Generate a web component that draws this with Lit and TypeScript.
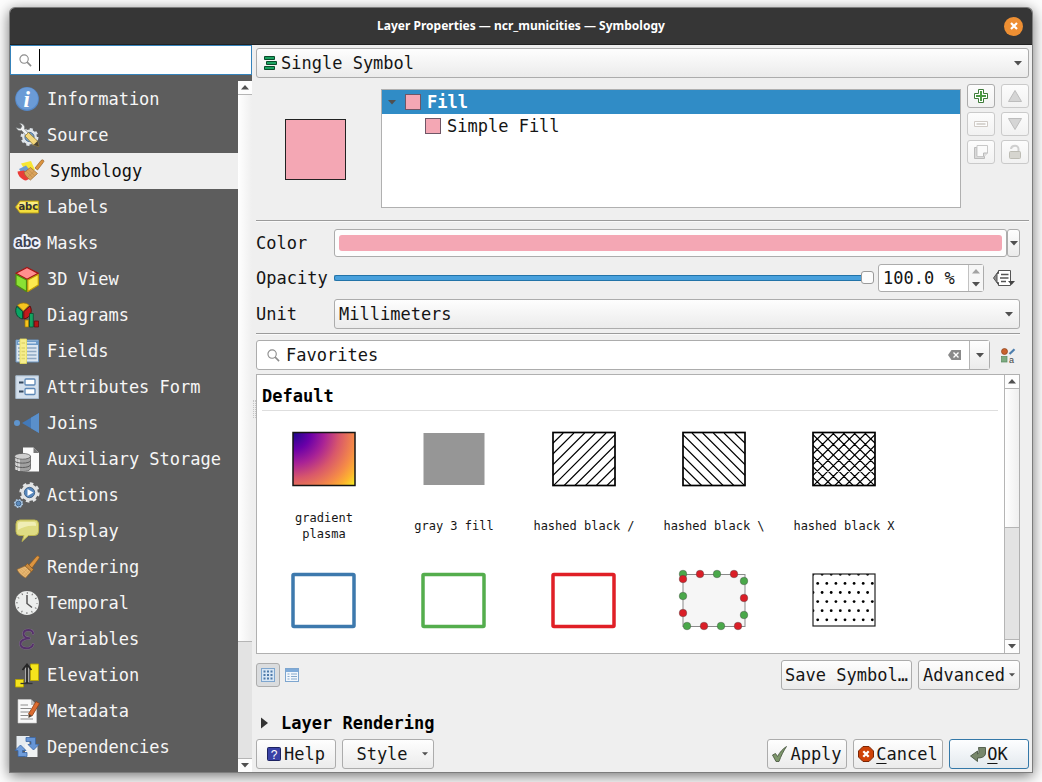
import { LitElement, html, svg, css } from "lit";
import { customElement, property, state } from "lit/decorators.js";
import { classMap } from "lit/directives/class-map.js";

const brush = svg`
  <path d="M13 11 21.5 1.5Q23 .2 24 1.500T23.500 4L17 13z" fill="#dc9440" stroke="#8a5314" stroke-width=".6"/>
  <path d="M12.500 8.500 18.500 14.500 16.500 16.800 10 11z" fill="#c98a3e" stroke="#80501a" stroke-width=".6"/>
  <path d="M10 11 16 16.800 10.500 23C7 21 3.500 18 2 14.500z" fill="#e8b873" stroke="#99682c" stroke-width=".7"/>
  <path d="M8 12.500 14 18.500M5.800 13.500 12.300 20M4 14.500 11 21.500M12.500 13.500 6.500 19.500M14.500 15.500 9 21.500" stroke="#cf9850" stroke-width=".5"/>`;

const gear = (x: number, y: number, r: number, body: string, core: string) => svg`
  <circle cx=${x} cy=${y} r=${r} fill=${body}/>
  <circle cx=${x} cy=${y} r=${r} fill="none" stroke=${body} stroke-width=${r * 0.42}
    stroke-dasharray="${(r * Math.PI) / 8} ${(r * Math.PI) / 8}"/>
  <circle cx=${x} cy=${y} r=${r * 0.62} fill=${core} stroke="#36577a" stroke-width=".8"/>`;

const icons: Record<string, unknown> = {
  Information: svg`
    <circle cx="12" cy="12" r="11.900" fill="#5587c6"/>
    <circle cx="12" cy="11.500" r="11" fill="#6b9bd6"/>
    <text x="11.600" y="20" text-anchor="middle" class="i">i</text>`,
  Source: svg`
    ${gear(14.5, 14, 7.4, "#dfe5ea", "#7ea3c8")}
    <path d="M1 4.500C2 7 4.500 8.500 6.500 7.500L15.500 17.500 18.500 15.500 9.500 6C10.500 3 8 .3 4.500 .3L7 3 5.500 5.500 2.500 5z" fill="#eef0f1" stroke="#6d7173" stroke-width=".7"/>
    <path d="M10 13 13.500 9.500 22.500 18 24 23.500 18.500 22z" fill="#f3d77c" stroke="#8f7a35" stroke-width=".8"/>
    <path d="M22.500 18 24 23.500 18.500 22z" fill="#4a4334"/>`,
  Symbology: svg`
    <path d="M3 4.500 13 2 17 11 8 13z" fill="#f8e632"/>
    <path d="M1 10 8 6.500 14 14 5 16z" fill="#6d9bd0"/>
    <path d="M-.5 12.500 6 11.500 14 18.500 8 21.500C4 21 0 17 -.5 12.500z" fill="#ea3c37"/>
    <g transform="translate(4 0)"><path d="M13 9 19 1.500Q20.500 .2 21.500 1.300T21 3.800L15.500 11z" fill="#dc9440" stroke="#8a5314" stroke-width=".6"/>
    <path d="M8.500 8.500 15.500 14.500 8.500 21C5.500 19 3 16.500 2 13.500z" fill="#d9a35c" stroke="#99682c" stroke-width=".7"/>
    <path d="M6 10.500 12.500 16.500M4 12 10.500 18.500M12 12.500 6 18" stroke="#b98540" stroke-width=".5"/></g>`,
  Labels: svg`
    <path d="M.5 12 5 6H23.500V18H5z" fill="#f3de3d" stroke="#b59a16" stroke-width=".9"/>
    <path d="M5.500 7H22.500V11H2.500z" fill="#faee83"/>
    <text x="13.300" y="15.300" text-anchor="middle" class="tag">abc</text>`,
  Masks: svg`
    <text x="12" y="16" text-anchor="middle" class="mask">abc</text>`,
  "3D View": svg`
    <path d="M12 .5 23.300 6.300 12 12.300 1 6.300z" fill="#ff8f8f" stroke="#a61313" stroke-width="1.300" stroke-linejoin="round"/>
    <path d="M1 7.500 11.500 13V24.500L1 18z" fill="#8ae234" stroke="#4f8b10" stroke-width="1.200" stroke-linejoin="round"/>
    <path d="M23.300 7.500 12.800 13V24.500L23.300 18z" fill="#fce94f" stroke="#c4a000" stroke-width="1.200" stroke-linejoin="round"/>`,
  Diagrams: svg`
    <path d="M8.500 8 2.500 2.300C6 -.8 11 -.8 14.200 2.300z" fill="#f7c51e" stroke="#9f7800" stroke-width=".7"/>
    <path d="M7.500 8.500V16C2 15 -1 9 1.800 3.300z" fill="#0aa564" stroke="#06452a" stroke-width=".9"/>
    <path d="M8.800 8.500 15 3C18 8 15.500 15 8.800 16z" fill="#c11b1b" stroke="#5a0808" stroke-width=".9"/>
    <path d="M10 17H13.500V24H10z" fill="#f7c51e" stroke="#9f7800" stroke-width=".7"/>
    <path d="M14.500 10.500H18.300V24H14.500z" fill="#13a560" stroke="#06452a" stroke-width=".7"/>
    <path d="M19.300 18H23.500V24H19.300z" fill="#b31515" stroke="#5a0808" stroke-width=".7"/>`,
  Fields: svg`
    <path d="M1 1H23.500V23H1z" fill="#dbe6f1" stroke="#6a93bd" stroke-width="1"/>
    <path d="M1.500 1.500H23V6H1.500z" fill="#6e9cca"/>
    <path d="M3 3.700H6M12 3.700H21" stroke="#cfe0f2" stroke-width="1.500"/>
    <path d="M3 9H5M12 9H21.500M3 12.500H5M12 12.500H21.500M3 16H5M12 16H21.500M3 19.500H5M12 19.500H21.500" stroke="#8fa9c4" stroke-width="1.500"/>
    <path d="M5 0H11.500V24.500H5z" fill="#f6ee8c" stroke="#e8dd5a" stroke-width=".8"/>
    <path d="M6.500 4H10M6.500 9H10M6.500 12.500H10M6.500 16H10M6.500 19.500H10" stroke="#ded56c" stroke-width="1.300"/>`,
  "Attributes Form": svg`
    <path d="M.8 .8H23.500V23.500H.8z" fill="#d3dfec" stroke="#a9bccf"/>
    <path d="M4 7.500H8.500M4 16.500H8.500" stroke="#33475c" stroke-width="1.800"/>
    <rect x="10" y="4" width="10" height="6" rx="1" fill="#fff" stroke="#5d88b6" stroke-width="1.300"/>
    <rect x="10" y="13.500" width="10" height="6" rx="1" fill="#fff" stroke="#5d88b6" stroke-width="1.300"/>`,
  Joins: svg`
    <circle cx="2" cy="12" r="3" fill="#5f95ce"/>
    <path d="M7 12 24 2V22z" fill="#4379b8"/><path d="M16 6.700 24 2V22L16 17.300z" fill="#5a8fca"/>`,
  "Auxiliary Storage": svg`
    <path d="M8 .5H18.500L24 6V24.500H8z" fill="#fbfbfb"/><path d="M18.500 .5V6H24z" fill="#777"/>
    <path d="M-.5 9V21.500C-.5 25.500 15.500 25.500 15.500 21.500V9z" fill="#a0a0a0" stroke="#555" stroke-width=".7"/>
    <path d="M1.500 11V23M4 11V24" stroke="#d8d8d8" stroke-width="2"/>
    <ellipse cx="7.500" cy="9.300" rx="8" ry="2.900" fill="#cfcfcf" stroke="#555" stroke-width=".7"/>
    <path d="M-.5 13.500C-.5 17 15.500 17 15.500 13.500M-.5 17.500C-.5 21.500 15.500 21.500 15.500 17.500" fill="none" stroke="#5d5d5d" stroke-width="1"/>`,
  Actions: svg`
    ${gear(14.5, 9.5, 8.4, "#e2e4e5", "#5687bd")}
    <path d="M12.500 6V13L18.300 9.500z" fill="#fff"/>
    ${gear(3.5, 20.5, 3.8, "#a8c4e0", "#5c8bbd")}`,
  Display: svg`
    <path d="M5 1H19.500Q23.500 1 23.500 5V12.500Q23.500 16.500 19.500 16.500H13.500L7 22.500 9 16.500H5Q1 16.500 1 12.500V5Q1 1 5 1z" fill="#dfdc83" stroke="#bdb64f"/>
    <path d="M5 3H19Q21 3 21 5V7C14 6 8 8 3 11V5Q3 3 5 3z" fill="#f0eeb5"/>`,
  Rendering: brush,
  Temporal: svg`
    <circle cx="12" cy="12" r="11.900" fill="#eceeed"/>
    <circle cx="12" cy="12" r="10" fill="none" stroke="#777" stroke-width="1.800" stroke-dasharray="1 4.236" stroke-dashoffset=".5"/>
    <path d="M12 4V12.500L17 16.500" fill="none" stroke="#555" stroke-width="1.500"/>`,
  Variables: svg`
    <path d="M18 6.500C18.500 2 9 1.500 8.500 6.500C8.500 9.500 11 11 14.500 11.200C8.500 11.500 5 14 5.500 17.500C6.500 22.500 16.500 22.500 18 17.500" fill="none" stroke="#8d7898" stroke-width="2.600" stroke-linecap="round" stroke-linejoin="round"/>
    <path d="M18 6.500C18.500 2 9 1.500 8.500 6.500C8.500 9.500 11 11 14.500 11.200C8.500 11.500 5 14 5.500 17.500C6.500 22.500 16.500 22.500 18 17.500" fill="none" stroke="#55316a" stroke-width="1.900" stroke-linecap="round" stroke-linejoin="round"/>`,
  Elevation: svg`
    <path d="M15.500 1H23.500V17.500H15.500z" fill="#f5e41d" stroke="#b7a400" stroke-width=".9"/>
    <path d="M.5 16.500H8.500V24H.5z" fill="#f5e41d" stroke="#b7a400" stroke-width=".9"/>
    <path d="M12 19V3" stroke="#bdbdbd" stroke-width="3.600"/>
    <path d="M5.500 20.500H17.500" stroke="#333" stroke-width="1.300"/>
    <path d="M12 20V3M7.500 7 12 1.500 16.500 7" fill="none" stroke="#252525" stroke-width="1.800"/>`,
  Metadata: svg`
    <path d="M3 .5H16L21.500 6V24H3z" fill="#f8f8f8" stroke="#c9c9c9" stroke-width=".6"/>
    <path d="M16 .5V6H21.500z" fill="#bbb"/>
    <path d="M5.500 6H13M5.500 9.500H16M5.500 13H15M5.500 16.500H13M5.500 20H18" stroke="#8b8b8b" stroke-width="1.100"/>
    <path d="M21 2.500 24.500 4.500 17 17 13.500 15z" fill="#dd6c30" stroke="#8e3d12" stroke-width=".8"/>
    <path d="M13.500 15 17 17 13.500 19z" fill="#4b3a2c"/>`,
  Dependencies: svg`
    <path d="M1.500 1H14.500V14H1.500z" fill="#e5ebf0"/><path d="M10 9H22.500V22H10z" fill="#f1f3f4"/>
    <path d="M11 2.500H20.500V9.500H24L18.500 15 13 9.500H16V6.500H11z" fill="#6695d6" stroke="#3a66a5" stroke-width=".8"/>
    <path d="M12 21.500H3V15.500H0L5.500 10 11 15.500H7.500V17.500H12z" fill="#6f9ddb" stroke="#3a66a5" stroke-width=".8"/>`,
};

const arrow = html`<svg class="arrow" width="8" height="5" viewBox="0 0 8 5" aria-hidden="true"><path d="M0 0H8L4 4.500z" fill="#505050"/></svg>`;
const arrowUp = html`<svg class="arrow" width="8" height="5" viewBox="0 0 8 5" aria-hidden="true"><path d="M0 4.500H8L4 0z" fill="#505050"/></svg>`;
const lens = html`<svg class="lens" width="13" height="13" viewBox="0 0 14 14" aria-hidden="true"><circle cx="5.500" cy="5.500" r="4.500" fill="none" stroke="#8c8c8c" stroke-width="1.200"/><path d="M8.800 8.800 13 13" stroke="#8c8c8c" stroke-width="1.700"/></svg>`;

const control = css`
  * { box-sizing: border-box; }
  button, input, select { font: inherit; color: inherit; margin: 0; }
  svg { display: block; flex: none; overflow: visible; }
`;

@customElement("scroll-rail")
export class ScrollRail extends LitElement {
  @property() label = "";
  static styles = [control, css`
    :host { display: flex; flex-direction: column; background: #e3e3e3; }
    button { display: grid; place-items: center; height: 14px; padding: 0; border: 0; background: #fdfdfd; flex: none; }
    .up { border-bottom: 1px solid #b5b5b5; }
    .down { border-top: 1px solid #b5b5b5; }
    .track { flex: 1; display: flex; flex-direction: column; }
    .thumb { flex: var(--thumb); background: linear-gradient(90deg, #fff, #efefef); border-bottom: 1px solid #b5b5b5; }
    .rest { flex: var(--rest); }
  `];
  render() {
    return html`
      <button class="up" aria-label="Scroll ${this.label} up">${arrowUp}</button>
      <div class="track"><div class="thumb"></div><div class="rest"></div></div>
      <button class="down" aria-label="Scroll ${this.label} down">${arrow}</button>`;
  }
}

const STEP = 10.7;
const slashes = Array.from({ length: 12 }, (_, k) => {
  const c = 53 + STEP * (k - 5);
  return `M${c} 0L${c - 53} 53`;
}).join("");
const backslashes = Array.from({ length: 12 }, (_, k) => {
  const c = 9 + STEP * (k - 6);
  return `M${c} 0L${c + 53} 53`;
}).join("");

const hatch = (d: string) => svg`
  <svg x="-31" y="-26" width="62" height="53" class="clip"><path d=${d} stroke="#000" stroke-width="1.200"/></svg>
  <rect x="-31" y="-26.500" width="62" height="53" fill="none" stroke="#000" stroke-width="1.700"/>`;
const outline = (c: string) => svg`<rect x="-31" y="-25.500" width="61" height="52" rx="1" fill="none" stroke=${c} stroke-width="3.500"/>`;

const RED = "#da1e27";
const GREEN = "#4aa84a";
const markers: [number, number][] = [
  [-31, -26], [-14, -26], [3, -26], [20, -26], [30, -19], [30, -2], [30, 15],
  [24, 26], [7, 26], [-10, 26], [-27, 26], [-31, 13], [-31, -4], [-31, -21],
];
const dots: unknown[] = [];
for (let r = 0; r < 6; r++) {
  for (let k = 0; k < 8; k++) {
    dots.push(svg`<circle cx=${(r % 2 ? 4.7 : 0) + k * 9.1} cy=${0.3 + r * 9.1} r="1.400"/>`);
  }
}

const symbols = [
  { name: "gradient plasma", art: svg`
    <defs><radialGradient id="plasma" gradientUnits="userSpaceOnUse" cx="-31" cy="-27" r="80">
      <stop offset="0" stop-color="#1a078c"/><stop offset=".22" stop-color="#6a00a8"/>
      <stop offset=".4" stop-color="#a82296"/><stop offset=".58" stop-color="#d8576b"/>
      <stop offset=".78" stop-color="#f58b47"/><stop offset=".9" stop-color="#fdb42f"/><stop offset="1" stop-color="#f5e626"/>
    </radialGradient></defs>
    <rect x="-31" y="-26.500" width="62" height="53" fill="url(#plasma)" stroke="#151515" stroke-width="1.500"/>` },
  { name: "gray 3 fill", art: svg`<rect x="-30.500" y="-26" width="61" height="52" fill="#969696"/>` },
  { name: "hashed black /", art: hatch(slashes) },
  { name: "hashed black \\", art: hatch(backslashes) },
  { name: "hashed black X", art: hatch(slashes + backslashes) },
  { name: "", art: outline("#3d79ad") },
  { name: "", art: outline("#54ad4d") },
  { name: "", art: outline("#e01f26") },
  { name: "", art: svg`
    <rect x="-31" y="-25.500" width="62" height="52" fill="#f6f6f6" stroke="#8a8a8a"/>
    ${markers.map(([x, y], i) => svg`<circle cx=${x} cy=${y} r="3.800" fill=${i % 2 ? RED : GREEN} stroke="#444" stroke-width=".4"/>`)}` },
  { name: "", art: svg`
    <svg x="-31" y="-26" width="62" height="53" class="clip">${dots}</svg>
    <rect x="-31" y="-26" width="62" height="52" fill="none" stroke="#222" stroke-width="1.200"/>` },
];

const toolIcons = [
  { label: "Add symbol layer", on: true, art: svg`<path d="M4.500 .5H9.500V4.500H13.500V9.500H9.500V13.500H4.500V9.500H.5V4.500H4.500z" fill="#fff" stroke="#3f7a3a"/><path d="M7 2V12M2 7H12" stroke="#4a9a42" stroke-width="2"/>` },
  { label: "Move up", art: svg`<path d="M.5 12.500 7 1.500 13.500 12.500z" fill="#d5d5d5" stroke="#bdbdbd"/>` },
  { label: "Remove symbol layer", art: svg`<path d="M.5 4.500H13.500V9.500H.5z" fill="#fdfdfd" stroke="#d0cbc6"/><path d="M2.500 7H11.500" stroke="#cdc8c3" stroke-width="1.500"/>` },
  { label: "Move down", art: svg`<path d="M.5 1.500H13.500L7 12.500z" fill="#d5d5d5" stroke="#bdbdbd"/>` },
  { label: "Duplicate", art: svg`<path d="M.5 2.500V13.500H10.500V11H3V2.500z" fill="#d9d9d9" stroke="#bbb"/><path d="M3 .5H13.500V8L10 11.500H3z" fill="#fafafa" stroke="#c8c8c8"/><path d="M13.500 8H9.500V11.500" fill="#ddd" stroke="#bbb"/>` },
  { label: "Lock colour", art: svg`<path d="M3 4C3.500 0 10.500 -.5 10.500 4V7" fill="none" stroke="#cfcfcf" stroke-width="2"/><rect x="1.500" y="6.500" width="11" height="7" rx="1" fill="#d6d5cf" stroke="#bdbcb4"/>` },
];

@customElement("app-root")
export class AppRoot extends LitElement {
  @state() private page = "Symbology";

  static styles = [control, css`
    :host {
      display: flex; box-sizing: border-box; height: 100vh; padding: 8px 10px 10px;
      background: #fdfdfd; color: #151515; overflow: hidden;
      font: 17px/24px "DejaVu Sans Mono", "Liberation Mono", monospace;
    }
    .window {
      flex: 1; min-width: 0; display: flex; flex-direction: column;
      border-radius: 5px 5px 0 0; background: #efefef;
      box-shadow: 0 0 0 1px #7c7c7c, 0 3px 14px 1px rgba(0, 0, 0, 0.55);
    }
    .title {
      display: grid; grid-template-columns: 1fr auto 1fr; align-items: center; height: 37px; flex: none;
      background: #363636; border-radius: 5px 5px 0 0; border-bottom: 1px solid #222; padding: 0 9px;
    }
    .title h1 { grid-column: 2; margin: 0; color: #fff; font: bold 12px/18px "Noto Sans", "Open Sans", sans-serif; }
    .close { justify-self: end; width: 19px; height: 19px; padding: 0; border: 0; border-radius: 50%; background: #ee8f33; display: grid; place-items: center; }
    .body { flex: 1; min-height: 0; display: grid; grid-template-columns: 242px 4px minmax(0, 1fr); }

    .side { display: flex; flex-direction: column; min-height: 0; background: #5d5d5d; }
    .search { position: relative; display: flex; align-items: center; height: 30px; flex: none; background: #fff; border: 1px solid #3583bb; padding-left: 8px; gap: 6px; }
    .search input { flex: 1; min-width: 0; border: 0; outline: 0; background: none; padding: 0; }
    .caret { position: absolute; left: 28px; top: 3px; width: 1px; height: 22px; background: #000; }
    .pages { flex: 1; min-height: 0; display: flex; padding-top: 6px; }
    .pages ul { flex: 1; min-width: 0; margin: 0; padding: 0; list-style: none; overflow: hidden; }
    .page { display: flex; align-items: center; gap: 8px; width: 100%; height: 36px; padding: 0 0 0 5px; border: 0; background: none; color: #f6f6f6; text-align: left; }
    .page.current { background: #efefef; color: #111; padding-left: 8px; }
    .pages scroll-rail { width: 14px; --thumb: 548; --rest: 116; }
    .i { font: italic bold 23px "Liberation Serif", serif; fill: #fff; }
    .tag { font: bold 10px "DejaVu Sans", sans-serif; fill: #333; }
    .mask { font: bold 14px "Liberation Sans", sans-serif; fill: #3a3f50; stroke: #eef0fa; stroke-width: 4px; stroke-linejoin: round; paint-order: stroke; }

    .split { align-self: center; width: 3px; height: 18px; justify-self: center; border: 1px dotted #c5c5c5; border-width: 0 1px; }
    .main { display: flex; flex-direction: column; min-width: 0; min-height: 0; padding: 3px 3px 3px 0; }
    .inner { padding-right: 9px; }
    .rule { height: 2px; margin: 0; border: 0; border-top: 1px solid #9b9b9b; background: #fafafa; flex: none; }

    .push, .pick select {
      height: 30px; border: 1px solid #acacac; border-radius: 3px;
      background: linear-gradient(#fefefe, #ebebeb);
    }
    .pick { position: relative; flex: 1; min-width: 0; display: flex; }
    .pick select { appearance: none; width: 100%; padding: 0 24px 0 4px; }
    .pick .arrow { position: absolute; right: 7px; top: 13px; pointer-events: none; }
    .pick .mark { position: absolute; left: 8px; top: 8px; pointer-events: none; }
    .renderer { flex: none; }
    .renderer select { padding-left: 24px; }

    .symbol { display: flex; margin: 6px 0 12px; height: 124px; flex: none; }
    .preview { width: 125px; display: grid; place-items: center; padding: 7px 6px 0 0; }
    .preview div { width: 61px; height: 61px; background: #f4a7b4; border: 1px solid #222; }
    .tree { flex: 1; min-width: 0; margin: 5px 6px 0 0; padding: 0; list-style: none; background: #fff; border: 1px solid #b0b0b0; }
    .tree li { display: flex; align-items: center; gap: 6px; height: 24px; padding-left: 43px; }
    .tree .root { background: #308cc6; color: #fff; font-weight: bold; padding-left: 6px; }
    .root .arrow { margin-right: 3px; }
    .chip { width: 16px; height: 16px; background: #f4a7b4; border: 1px solid #6f5666; }
    .tools { display: grid; grid-template-columns: 28px 28px; grid-auto-rows: 24px; gap: 4px 6px; align-content: start; }
    .tool { display: grid; place-items: center; padding: 0; border: 1px solid #cacaca; border-radius: 3px; background: linear-gradient(#fcfcfc, #f1f1f1); }
    .tool.on { border-color: #acacac; }

    .form { display: grid; grid-template-columns: 78px minmax(0, 1fr); row-gap: 7px; align-items: center; padding-top: 7px; padding-bottom: 4px; }
    .form > div { display: flex; align-items: center; min-width: 0; }
    .color { flex: 1; height: 28px; padding: 4px; border: 1px solid #acacac; border-radius: 3px; background: #fdfdfd; }
    .color span { display: block; height: 16px; border-radius: 3px; background: #f4a7b4; }
    .more { width: 13px; height: 28px; padding: 0; display: grid; place-items: center; border: 1px solid #acacac; border-radius: 3px; background: linear-gradient(#fefefe, #ebebeb); }
    .range { flex: 1; min-width: 0; appearance: none; height: 14px; background: none; }
    .range::-webkit-slider-runnable-track { height: 6px; border: 1px solid #2273a8; border-right: 0; border-radius: 2px; background: #48a0dc; }
    .range::-webkit-slider-thumb { appearance: none; width: 13px; height: 13px; margin-top: -5px; border: 1px solid #9a9a9a; border-radius: 3px; background: #fcfcfc; }
    .spin { display: flex; width: 106px; height: 28px; margin-left: 4px; background: #fff; border: 1px solid #acacac; border-radius: 3px; }
    .spin input { flex: 1; min-width: 0; border: 0; padding: 0 0 0 4px; background: none; outline: 0; }
    .spin div { width: 15px; display: grid; border-left: 1px solid #c2c2c2; background: #f6f6f6; }
    .spin button { display: grid; place-items: center; padding: 0; border: 0; background: none; }
    .spin .dim { opacity: 0.5; }
    .plain { display: grid; place-items: center; padding: 0; border: 0; background: none; }
    .override { width: 36px; height: 28px; padding-left: 4px; }

    .filter { display: flex; padding-top: 5px; padding-bottom: 4px; }
    .combo { flex: 1; display: flex; align-items: center; height: 30px; border: 1px solid #acacac; border-radius: 3px; background: #fff; padding-left: 10px; gap: 6px; }
    .combo input { flex: 1; min-width: 0; border: 0; outline: 0; padding: 0; background: none; }
    .combo .drop { width: 20px; height: 28px; margin-left: 2px; padding: 0; display: grid; place-items: center; border: 0; border-left: 1px solid #b5b5b5; background: linear-gradient(#fefefe, #ebebeb); }
    .manage { width: 30px; padding-left: 6px; }

    .library { flex: 1; min-height: 0; display: flex; margin-right: 9px; background: #fff; border: 1px solid #b0b0b0; }
    .gallery { flex: 1; min-width: 0; overflow: hidden; }
    .gallery h2 { margin: 0 6px 0 5px; padding-top: 7px; font: inherit; font-weight: bold; line-height: 28px; color: #000; border-bottom: 1px solid #dedede; }
    .grid { display: grid; grid-template-columns: repeat(auto-fill, 130px); grid-auto-rows: 141px; margin: 0; padding: 0 0 0 2px; list-style: none; }
    .grid li { display: flex; flex-direction: column; align-items: center; gap: 21px; padding-top: 18px; }
    .name { display: flex; align-items: center; height: 32px; max-width: 104px; text-align: center; font-size: 12px; line-height: 16px; }
    .clip { overflow: hidden; }
    .library scroll-rail { width: 15px; border-left: 1px solid #b5b5b5; --thumb: 139; --rest: 111; }

    .actions { display: flex; align-items: center; gap: 6px; padding-top: 6px; flex: none; }
    .view { width: 24px; height: 24px; border: 1px solid transparent; border-radius: 3px; background: none; padding: 0; display: grid; place-items: center; }
    .view.on { background: #dadcde; border-color: #adadad; }
    .actions .view + .view { margin-left: -6px; }
    .grow { flex: 1; }
    .push { display: flex; align-items: center; justify-content: center; padding: 0 4px; white-space: nowrap; }
    .advanced { gap: 4px; width: 102px; }
    .save { width: 131px; }
    .push .arrow { width: 6px; height: 4px; }
    .fold { align-self: flex-start; display: flex; align-items: center; gap: 12px; margin: 21px 0 4px; height: 24px; padding: 0 0 0 4px; border: 0; background: none; font-weight: bold; color: #000; }
    .dialog { display: flex; gap: 6px; flex: none; }
    .help, .apply, .ok { width: 80px; }
    .help, .apply { gap: 3px; }
    .cancel { width: 90px; gap: 2px; }
    .style { width: 92px; gap: 14px; padding-left: 12px; }
    .ok { border-color: #3478a8; background: linear-gradient(#fdfeff, #e3e9ee); gap: 1px; }
    u { text-underline-offset: 3px; }
  `];

  render() {
    return html`
      <div class="window">
        <header class="title">
          <h1>Layer Properties — ncr_municities — Symbology</h1>
          <button class="close" aria-label="Close"><svg width="8" height="8" viewBox="0 0 8 8"><path d="M1 1 7 7M7 1 1 7" stroke="#fff" stroke-width="2.200"/></svg></button>
        </header>
        <div class="body">${this.renderSide()}<div class="split"></div>${this.renderMain()}</div>
      </div>`;
  }

  private renderSide() {
    return html`
      <aside class="side">
        <div class="search">${lens}<input type="text" aria-label="Search pages"><span class="caret"></span></div>
        <nav class="pages">
          <ul>
            ${Object.keys(icons).map((name) => html`<li>
              <button class=${classMap({ page: true, current: name === this.page })} @click=${() => (this.page = name)}>
                <svg width="24" height="24" viewBox="0 0 24 24" aria-hidden="true">${icons[name]}</svg>${name}
              </button></li>`)}
          </ul>
          <scroll-rail label="pages"></scroll-rail>
        </nav>
      </aside>`;
  }

  private renderMain() {
    return html`
      <main class="main">
        <div class="pick renderer">
          <select aria-label="Renderer"><option>Single Symbol</option></select>
          <svg class="mark" width="13" height="14" viewBox="0 0 13 14" aria-hidden="true"><path d="M.5 .5H10.500V3.500H.5zM2.500 5.500H12.500V8.500H2.500zM.5 10.500H10.500V13.500H.5z" fill="#1aa260" stroke="#0a4a2a"/></svg>
          ${arrow}
        </div>
        <section class="symbol">
          <div class="preview"><div></div></div>
          <ul class="tree">
            <li class="root">${arrow}<span class="chip"></span>Fill</li>
            <li><span class="chip"></span>Simple Fill</li>
          </ul>
          <div class="tools">
            ${toolIcons.map((t) => html`<button class=${classMap({ tool: true, on: !!t.on })} aria-label=${t.label} ?disabled=${!t.on}>
              <svg width="14" height="14" viewBox="0 0 14 14">${t.art}</svg></button>`)}
          </div>
        </section>
        <hr class="rule">
        <div class="inner">
          <div class="form">
            <label for="color">Color</label>
            <div><button class="color" id="color"><span></span></button><button class="more" aria-label="Color options">${arrow}</button></div>
            <label for="opacity">Opacity</label>
            <div>
              <input class="range" id="opacity" type="range" min="0" max="100" value="100">
              <div class="spin"><input type="text" aria-label="Opacity value" .value=${"100.0 %"}>
                <div><button class="dim" aria-label="Increase">${arrowUp}</button><button aria-label="Decrease">${arrow}</button></div></div>
              <button class="plain override" aria-label="Data-defined override">
                <svg width="22" height="18" viewBox="0 0 22 18"><path d="M6 1.500V16.500L.5 9z" fill="#8d8d8d" stroke="#555"/><path d="M5.500 1.500H17.500V16.500H5.500V13.500H4V4.500H5.500z" fill="#fff" stroke="#555"/><path d="M8 5.500H15.500M7 9H15.500M8 12.500H13" stroke="#555" stroke-width="1.300"/><path d="M15 12H22L18.500 16z" fill="#444"/></svg>
              </button>
            </div>
            <label for="unit">Unit</label>
            <div><div class="pick"><select id="unit"><option>Millimeters</option></select>${arrow}</div></div>
          </div>
          <hr class="rule">
          <div class="filter">
            <div class="combo">${lens}<input type="text" aria-label="Filter symbols" .value=${"Favorites"}>
              <button class="plain" aria-label="Clear"><svg width="13" height="10" viewBox="0 0 13 10"><path d="M3.500 0H13V10H3.500L0 5z" fill="#8a8a8a"/><path d="M5.500 2.500 10.500 7.500M10.500 2.500 5.500 7.500" stroke="#fff" stroke-width="1.400"/></svg></button>
              <button class="drop" aria-label="Show groups">${arrow}</button></div>
            <button class="plain manage" aria-label="Style manager">
              <svg width="14" height="15" viewBox="0 0 14 15"><circle cx="3.500" cy="3.500" r="3" fill="#c9622e" stroke="#8c4018" stroke-width=".7"/><path d="M8.500 6 13.500 1.200" stroke="#4d7fae" stroke-width="2.200"/><rect x=".5" y="8.500" width="5.500" height="5.500" fill="#7dab80" stroke="#5a8a5e" stroke-width=".7"/><text x="8" y="14.500" font-family="Liberation Sans, sans-serif" font-size="9" fill="#444">a</text></svg>
            </button>
          </div>
        </div>
        <section class="library">
          <div class="gallery">
            <h2>Default</h2>
            <ul class="grid">
              ${symbols.map((s) => html`<li><svg width="70" height="60" viewBox="-35 -30 70 60" aria-hidden="true">${s.art}</svg><span class="name">${s.name}</span></li>`)}
            </ul>
          </div>
          <scroll-rail label="symbols"></scroll-rail>
        </section>
        <div class="actions inner">
          <button class="view on" aria-label="Icon view"><svg width="14" height="14" viewBox="0 0 14 14"><rect x=".5" y=".5" width="13" height="13" fill="#d7e6f5" stroke="#7ea6cf"/><path d="M2.500 3.500H12M2.500 7H12M2.500 10.500H12" stroke="#4e79a8" stroke-width="2" stroke-dasharray="2 1.500"/></svg></button>
          <button class="view" aria-label="List view"><svg width="14" height="14" viewBox="0 0 14 14"><rect x=".5" y=".5" width="13" height="13" fill="#f2f7fc" stroke="#7ea6cf"/><path d="M1 2.500H13" stroke="#7fabd9" stroke-width="3"/><path d="M2.500 6H4.500M6 6H12M2.500 8.500H4.500M6 8.500H12M2.500 11H4.500M6 11H12" stroke="#86a9cc" stroke-width="1.200"/></svg></button>
          <span class="grow"></span>
          <button class="push save">Save Symbol…</button>
          <button class="push advanced">Advanced${arrow}</button>
        </div>
        <button class="fold" aria-expanded="false"><svg width="9" height="12" viewBox="0 0 9 12" aria-hidden="true"><path d="M1 .5 8 6 1 11.500z" fill="#333"/></svg>Layer Rendering</button>
        <footer class="dialog">
          <button class="push help"><svg width="14" height="14" viewBox="0 0 14 14"><rect x=".5" y=".5" width="13" height="13" rx="1" fill="#3a42a6" stroke="#1c2260"/><text x="7" y="11.500" text-anchor="middle" font-family="Liberation Sans, sans-serif" font-size="12" fill="#fff">?</text></svg>Help</button>
          <button class="push style">Style${arrow}</button>
          <span class="grow"></span>
          <button class="push apply"><svg width="15" height="16" viewBox="0 0 15 16"><path d="M.5 9 3.500 7.500 5.500 10.500C8 6 10.500 3 14.500 .5 11.500 5 9 10 7 15.500H4z" fill="#7d966b" stroke="#42513a" stroke-width=".8"/></svg>Apply</button>
          <button class="push cancel"><svg width="16" height="16" viewBox="0 0 16 16"><path d="M5 .5H11L15.500 5V11L11 15.500H5L.5 11V5z" fill="#cf4208" stroke="#7c2604"/><path d="M5.300 5.300 10.700 10.700M10.700 5.300 5.300 10.700" stroke="#fff" stroke-width="2.300"/></svg><span><u>C</u>ancel</span></button>
          <button class="push ok"><svg width="16" height="15" viewBox="0 0 16 15"><path d="M8.500 .5H15.500V6C15.500 9 13 11 7.500 11V14.500L.5 9 7.500 4V7C9 7 9 5 8.500 .5z" fill="#77876b" stroke="#3f4b38" stroke-width=".8"/></svg><span><u>O</u>K</span></button>
        </footer>
      </main>`;
  }
}
